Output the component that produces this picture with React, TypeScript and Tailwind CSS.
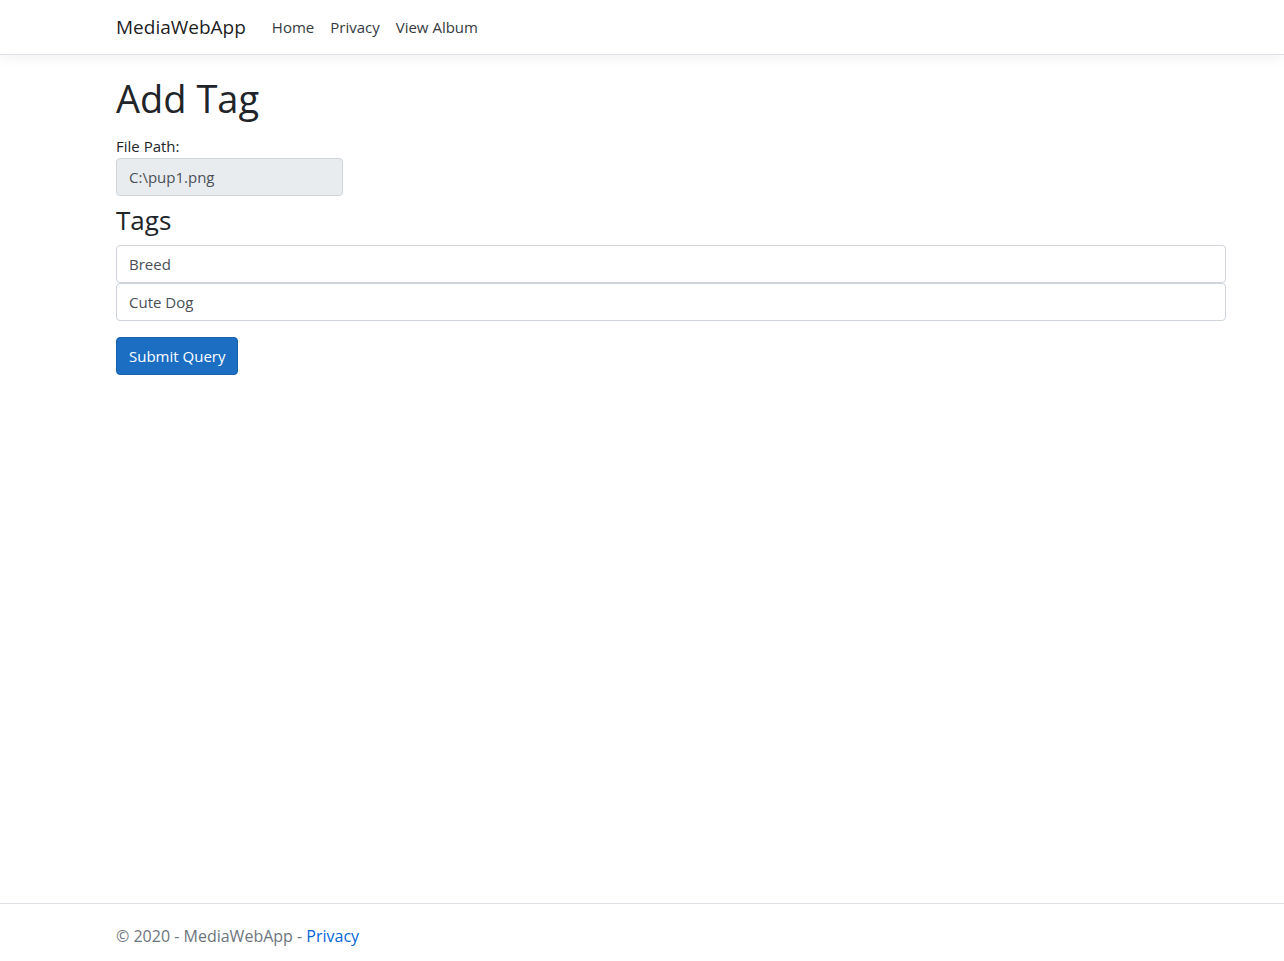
import React from "react";

const navLinks = ["Home", "Privacy", "View Album"];
const tags = ["Breed", "Cute Dog"];

const field =
  "block h-[38px] rounded border border-[#ced4da] px-3 text-[15px] text-[#495057]";

export default function App() {
  return (
    <div className="flex min-h-screen flex-col bg-white font-['Open_Sans','Noto_Sans',sans-serif] text-[15px] leading-6 text-[#212529]">
      <header className="border-b border-[#dee2e6] shadow-[0_4px_12px_rgba(0,0,0,0.05)]">
        <nav className="flex h-[54px] items-center pr-[58px] pl-[116px]">
          <a href="#" className="mr-[18px] text-[19px] text-black/90">
            MediaWebApp
          </a>
          <ul className="flex">
            {navLinks.map((name) => (
              <li key={name}>
                <a href="#" className="block px-2 text-[#343a40]">
                  {name}
                </a>
              </li>
            ))}
          </ul>
        </nav>
      </header>

      <main className="flex-1 pt-5 pr-[58px] pl-[116px]">
        <h1 className="text-[38px] leading-[46px]">Add Tag</h1>
        <form onSubmit={(e) => e.preventDefault()}>
          <div className="mt-[14px]">
            <label htmlFor="path" className="block leading-[23px]">
              File Path:
            </label>
            <input id="path" readOnly defaultValue="C:\pup1.png" className={`${field} w-[227px] bg-[#e9ecef]`} />
          </div>
          <h3 className="mt-2 mb-2 text-[26px] leading-[33px]">Tags</h3>
          {tags.map((tag) => (
            <input key={tag} aria-label={tag} defaultValue={tag} className={`${field} w-full bg-white`} />
          ))}
          <button type="submit" className="mt-4 h-[38px] rounded border border-[#1861ac] bg-[#1b6ec2] px-3 text-white">
            Submit Query
          </button>
        </form>
      </main>

      <footer className="border-t border-[#dee2e6] pt-5 pr-[58px] pb-[13px] pl-[116px] text-base text-[#6c757d]">
        <p>
          © 2020 - MediaWebApp -{" "}
          <a href="#" className="text-[#0366d6]">
            Privacy
          </a>
        </p>
      </footer>
    </div>
  );
}
